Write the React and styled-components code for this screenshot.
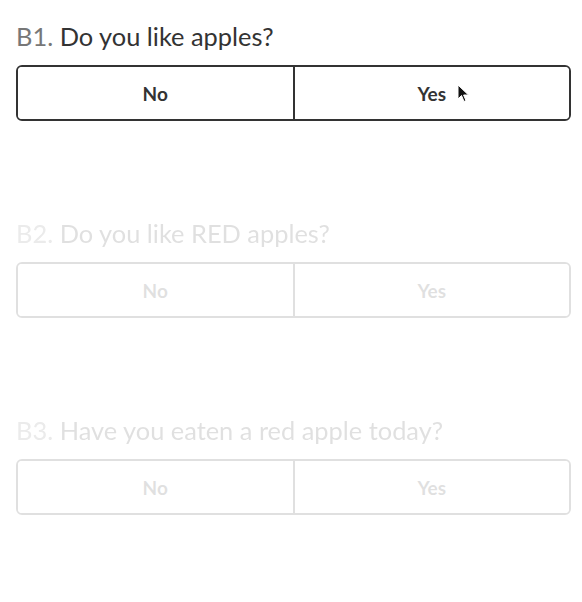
import React from "react";
import styled, { createGlobalStyle } from "styled-components";

const Global = createGlobalStyle`
  html, body { margin: 0; padding: 0; background: #fff; }
  body { font-family: Lato, "Noto Sans", sans-serif; color: #333; }
`;

const Page = styled.div`
  display: flex;
  flex-direction: column;
  gap: 97px;
  padding: 21px 11px 0 16px;
`;

const Question = styled.section`
  display: flex;
  flex-direction: column;
  gap: 14px;
  opacity: ${(p) => (p.$disabled ? 0.15 : 1)};
`;

const Title = styled.h2`
  margin: 0;
  font-size: 25.4px;
  font-weight: 400;
  line-height: 30px;
  color: #333;
`;

const Num = styled.span`
  color: #777;
`;

const Group = styled.div`
  display: flex;
  height: 56px;
  box-sizing: border-box;
  border: 2px solid #333;
  border-radius: 6px;
  overflow: hidden;
`;

const Choice = styled.button`
  flex: 1;
  position: relative;
  border: none;
  border-left: ${(p) => (p.$first ? "none" : "2px solid #333")};
  background: #fff;
  font-family: Lato, "Noto Sans", sans-serif;
  font-size: 19px;
  font-weight: 700;
  color: #333;
  padding: 0;
  cursor: pointer;
`;

const Cursor = styled.svg`
  position: absolute;
  left: 162px;
  top: 17px;
`;

const questions = [
  { num: "B1.", text: "Do you like apples?", disabled: false },
  { num: "B2.", text: "Do you like RED apples?", disabled: true },
  { num: "B3.", text: "Have you eaten a red apple today?", disabled: true },
];

export default function App() {
  return (
    <>
      <Global />
      <Page>
        {questions.map((q, i) => (
          <Question key={q.num} $disabled={q.disabled}>
            <Title>
              <Num>{q.num}</Num> {q.text}
            </Title>
            <Group>
              <Choice $first>No</Choice>
              <Choice>
                Yes
                {i === 0 && (
                  <Cursor width="13" height="19" viewBox="0 0 13 19">
                    <path
                      d="M1 1 L1 15 L4.5 11.5 L7 17.5 L9 16.6 L6.6 11 L11.5 11 Z"
                      fill="#111"
                      stroke="#fff"
                      strokeWidth="1"
                      strokeLinejoin="round"
                    />
                  </Cursor>
                )}
              </Choice>
            </Group>
          </Question>
        ))}
      </Page>
    </>
  );
}
